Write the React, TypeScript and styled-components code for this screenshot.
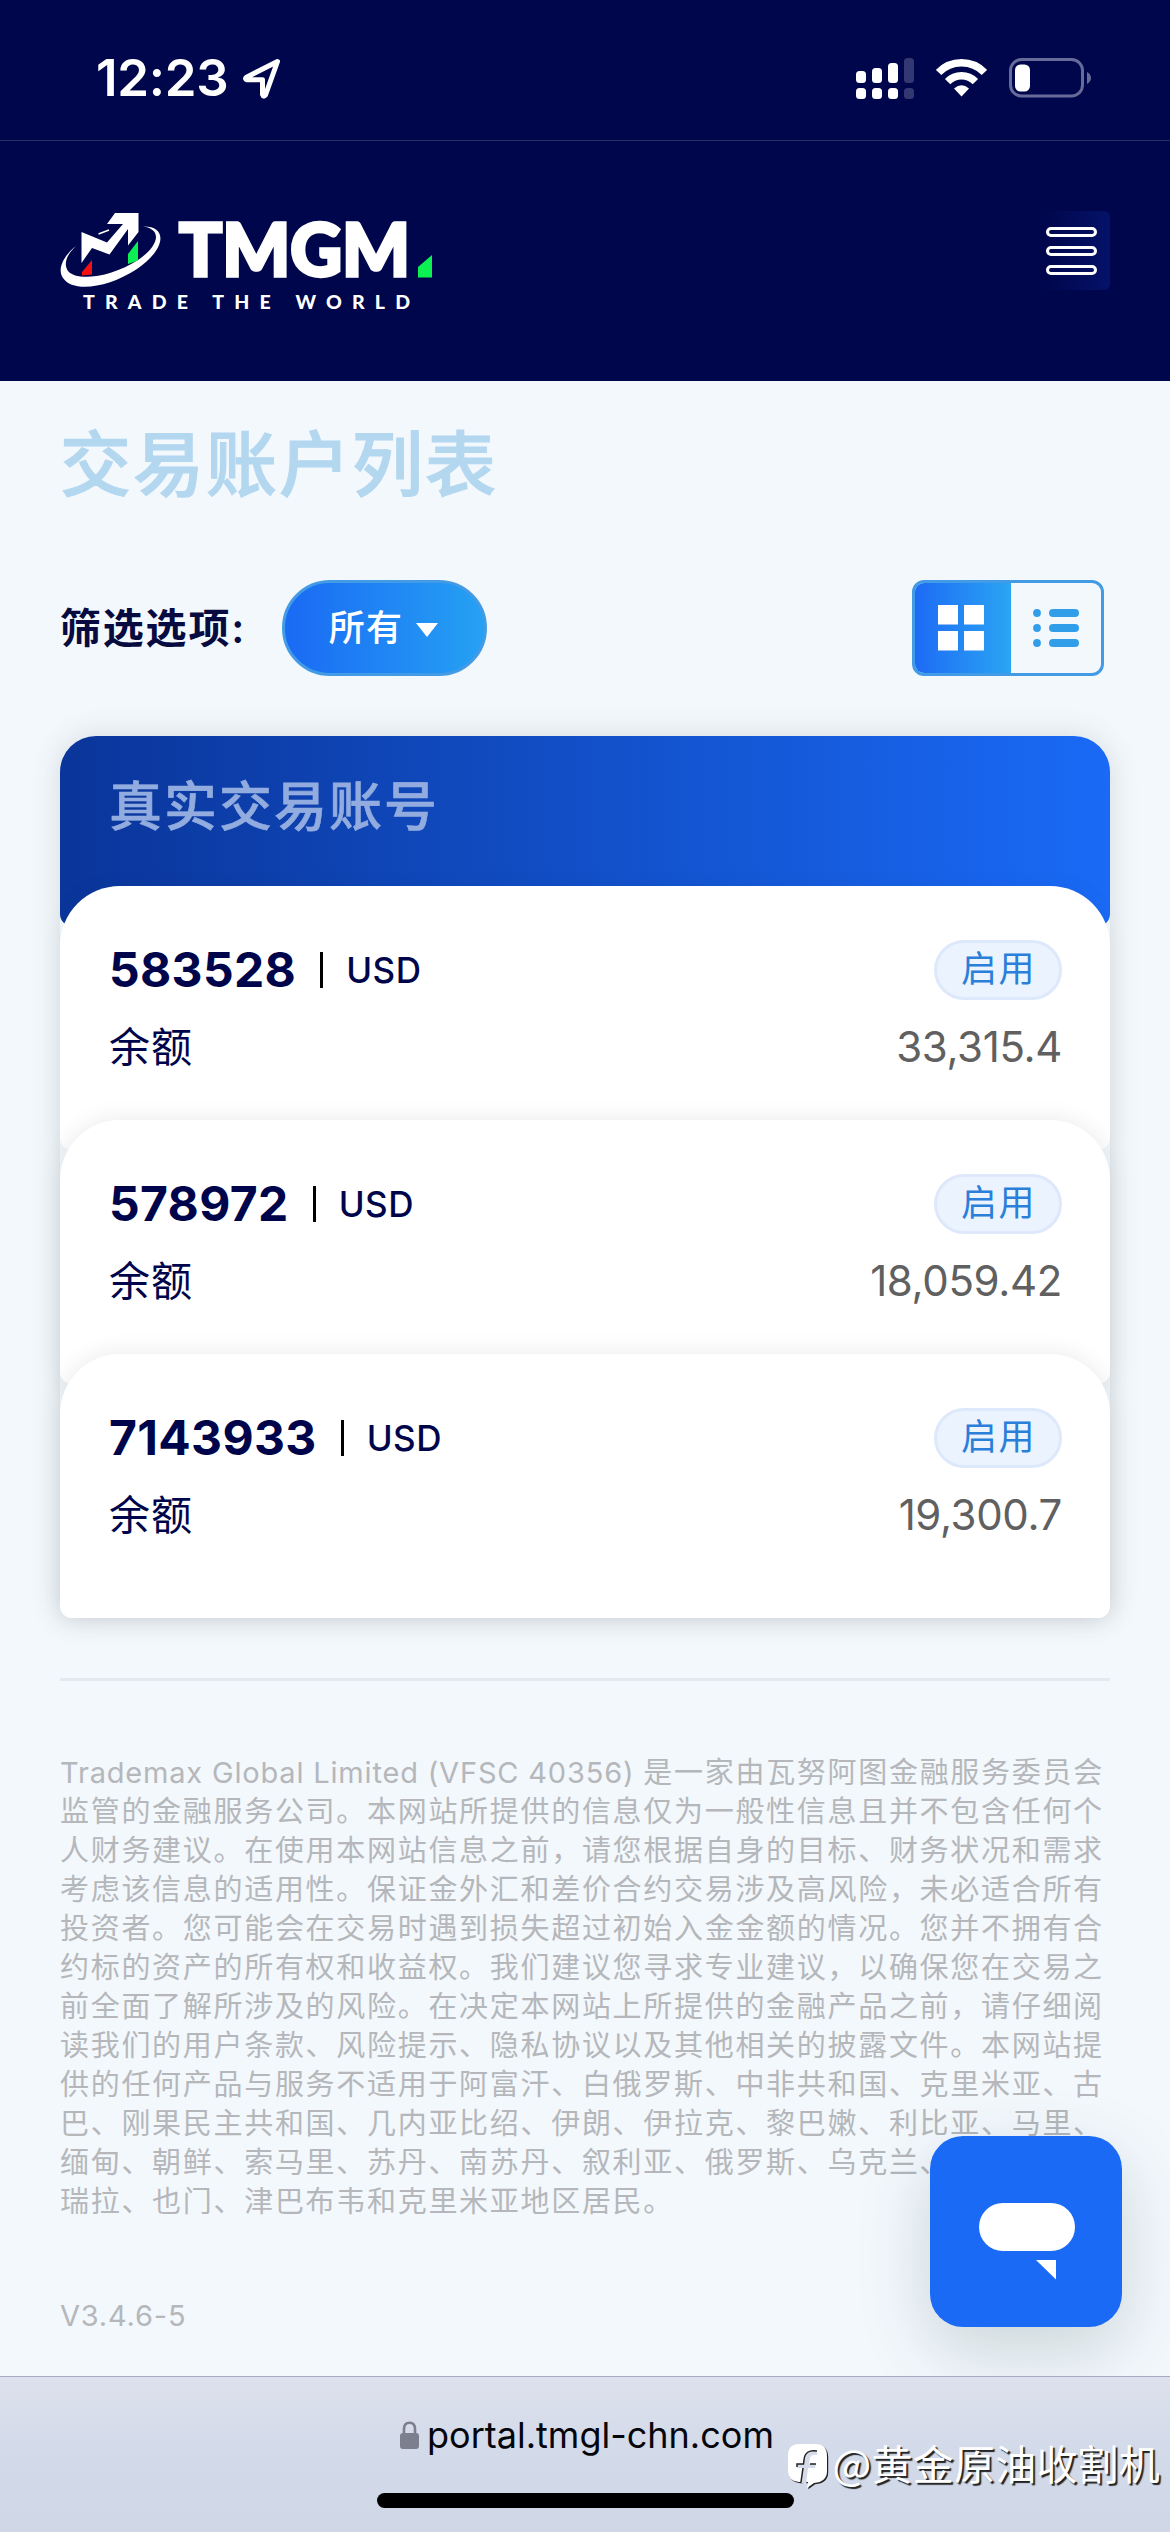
import React from "react";
import styled, { createGlobalStyle } from "styled-components";

const GlobalStyle = createGlobalStyle`
  * { box-sizing: border-box; }
  body {
    margin: 0;
    background: #f3f8fd;
    font-family: Inter, "Noto Sans CJK SC", sans-serif;
  }
`;

const Screen = styled.div`
  position: relative;
  display: flex;
  flex-direction: column;
  width: 1170px;
  height: 2532px;
  overflow: hidden;
  background: #f3f8fd;
`;

const StatusBar = styled.div`
  display: flex;
  align-items: flex-start;
  justify-content: space-between;
  height: 141px;
  padding: 48px 78px 0 96px;
  background: #00064b;
  border-bottom: 1px solid #2b3069;
`;

const StatusGroup = styled.div<{ $gap: number }>`
  display: flex;
  align-items: center;
  gap: ${(p) => p.$gap}px;
  height: 60px;
`;

const Clock = styled.span`
  font-size: 51px;
  line-height: 60px;
  font-weight: 600;
  letter-spacing: -0.3px;
  color: #fff;
`;

const NavBar = styled.header`
  display: flex;
  align-items: flex-start;
  justify-content: space-between;
  height: 240px;
  padding: 50px 60px 0;
  background: #00064b;
`;

const MenuButton = styled.button`
  display: flex;
  flex-direction: column;
  align-items: center;
  gap: 9px;
  width: 84px;
  height: 79px;
  margin-top: 20px;
  padding: 16px 4px 0 10px;
  border: 0;
  border-radius: 6px;
  background: linear-gradient(90deg, #00064b 20%, #041268 100%);
`;

const MenuBar = styled.span`
  width: 51px;
  height: 10px;
  border: 3px solid #fff;
  border-radius: 5px;
`;

const Content = styled.main`
  display: flex;
  flex-direction: column;
  flex: 1;
  padding: 0 60px;
`;

const PageTitle = styled.h1`
  margin: 33px 0 0;
  font-size: 71px;
  line-height: 100px;
  font-weight: 500;
  letter-spacing: 2px;
  color: #b4d7f0;
  -webkit-text-stroke: 1.2px #b4d7f0;
`;

const FilterRow = styled.div`
  display: flex;
  align-items: center;
  height: 96px;
  margin-top: 66px;
  padding-right: 6px;
`;

const FilterLabel = styled.span`
  width: 222px;
  margin-top: -1px;
  font-size: 41px;
  line-height: 60px;
  font-weight: 600;
  letter-spacing: 1.8px;
  white-space: nowrap;
  color: #070b40;
`;

const FilterButton = styled.button`
  display: flex;
  align-items: center;
  justify-content: center;
  gap: 13px;
  width: 205px;
  height: 96px;
  padding: 0 2px 0 0;
  border: 3px solid #429be4;
  border-radius: 48px;
  background: linear-gradient(90deg, #1a6af4, #25a1f3);
  font-family: inherit;
  font-size: 36px;
  line-height: 54px;
  font-weight: 500;
  letter-spacing: 1.2px;
  color: #fff;
`;

const ButtonText = styled.span`
  height: 54px;
`;

const ViewToggle = styled.div`
  display: flex;
  width: 192px;
  height: 96px;
  margin-left: auto;
  border: 3px solid #429be4;
  border-radius: 12px;
  overflow: hidden;
`;

const ToggleOption = styled.button<{ $active?: boolean }>`
  display: flex;
  align-items: center;
  justify-content: center;
  width: ${(p) => (p.$active ? 96 : 90)}px;
  padding: ${(p) => (p.$active ? "0 5px 0 0" : "0")};
  border: 0;
  background: ${(p) => (p.$active ? "linear-gradient(90deg, #1d6bf5, #2aa5f3)" : "transparent")};
`;

const AccountPanel = styled.section`
  display: flex;
  flex-direction: column;
  margin-top: 60px;
  border-radius: 36px 36px 12px 12px;
  box-shadow: 0 0 30px rgba(60, 70, 60, 0.16);
`;

const PanelHeader = styled.div`
  height: 190px;
  padding: 35px 49px 0;
  border-radius: 36px 36px 12px 12px;
  background: linear-gradient(90deg, #0a359a, #1a6af6);
  font-size: 53px;
  line-height: 72px;
  font-weight: 500;
  letter-spacing: 2px;
  color: #92acdf;
  -webkit-text-stroke: 0.6px #92acdf;
`;

const AccountCard = styled.article<{ $first?: boolean }>`
  position: relative;
  display: flex;
  flex-direction: column;
  height: 264px;
  margin-top: ${(p) => (p.$first ? -40 : -30)}px;
  padding: 54px 48px 0 49px;
  border-radius: 60px 60px 12px 12px;
  background: #fff;
  box-shadow: 0 0 24px rgba(0, 0, 0, ${(p) => (p.$first ? 0.04 : 0.09)});
`;

const CardRow = styled.div<{ $height: number }>`
  display: flex;
  align-items: center;
  justify-content: space-between;
  height: ${(p) => p.$height}px;
`;

const AccountId = styled.div`
  display: flex;
  align-items: center;
  color: #00054b;
`;

const AccountNumber = styled.span`
  font-size: 48px;
  line-height: 60px;
  font-weight: 700;
  letter-spacing: 0.35px;
`;

const Separator = styled.span`
  width: 3px;
  height: 36px;
  margin: 0 23px 0 24px;
  background: #000;
`;

const Currency = styled.span`
  margin-top: -1px;
  font-size: 35px;
  line-height: 60px;
  font-weight: 500;
  letter-spacing: 0.5px;
`;

const StatusBadge = styled.span`
  display: flex;
  align-items: center;
  justify-content: center;
  width: 128px;
  height: 60px;
  padding-left: 1px;
  border: 3px solid #dde9fb;
  border-radius: 30px;
  background: #ebf3fe;
  font-size: 36px;
  line-height: 52px;
  letter-spacing: 1.5px;
  color: #2a7fd8;
`;

const BadgeText = styled.span`
  height: 54px;
`;

const BalanceLabel = styled.span`
  margin-top: -1px;
  font-size: 41px;
  line-height: 60px;
  letter-spacing: 1px;
  color: #00054b;
`;

const Balance = styled.span`
  margin-top: -1px;
  font-size: 42px;
  line-height: 60px;
  letter-spacing: -0.35px;
  color: #606060;
`;

const Divider = styled.hr`
  width: 100%;
  height: 3px;
  margin: 60px 0 0;
  border: 0;
  background: #e3e9ee;
`;

const Disclaimer = styled.p`
  margin: 72px 0 0;
  font-size: 29px;
  line-height: 39px;
  letter-spacing: 1.7px;
  color: #b5b7ba;
`;

const DisclaimerLine = styled.span`
  display: block;
  white-space: nowrap;
`;

const Company = styled.span`
  letter-spacing: 0.82px;
`;

const Version = styled.div`
  margin-top: 75px;
  font-size: 29px;
  line-height: 39px;
  letter-spacing: 0.8px;
  color: #b5b7ba;
`;

const ChatButton = styled.button`
  position: absolute;
  left: 930px;
  top: 2136px;
  width: 192px;
  height: 191px;
  padding: 0;
  border: 0;
  border-radius: 33px;
  background: #1b6af5;
  box-shadow: 0 24px 72px rgba(20, 60, 50, 0.18);
`;

const BrowserBar = styled.footer`
  position: relative;
  display: flex;
  flex-direction: column;
  align-items: center;
  height: 156px;
  padding-top: 29px;
  border-top: 1px solid #a6abc2;
  background: linear-gradient(180deg, #dde1ed, #d3dae9 45%, #cfd6e6);
`;

const Address = styled.div`
  display: flex;
  align-items: center;
  gap: 8px;
  height: 57px;
  padding-left: 4px;
  font-size: 36px;
  line-height: 56px;
  color: #05060c;
`;

const HomeIndicator = styled.div`
  width: 417px;
  height: 15px;
  margin-top: 30px;
  border-radius: 8px;
  background: #000;
`;

const Watermark = styled.div`
  position: absolute;
  right: 10px;
  bottom: 41px;
  display: flex;
  align-items: center;
  gap: 3px;
  height: 58px;
  font-family: "Noto Sans CJK SC", sans-serif;
  font-size: 41px;
  font-weight: 400;
  line-height: 58px;
  letter-spacing: 0.2px;
  white-space: nowrap;
  color: #fff;
  text-shadow: 2px 2px 1px #222;
`;

function LocationIcon() {
  return (
    <svg width="40" height="42" viewBox="0 0 40 42">
      <path d="M35.500 4.500 4.500 20.200q-2.200 1.700.5 2.600h15.500V37.500q1 3 3 .5Z" fill="none" stroke="#fff" strokeWidth="5" strokeLinejoin="round" />
    </svg>
  );
}

function SignalIcon() {
  const bars = [
    { x: 0, y: 13, h: 12 },
    { x: 16, y: 10, h: 15 },
    { x: 32, y: 5, h: 20 },
    { x: 48, y: 0, h: 25 },
  ];
  return (
    <svg width="58" height="41" viewBox="0 0 58 41">
      {bars.map((b, i) => (
        <g key={b.x} fill={i === 3 ? "#333873" : "#fff"}>
          <rect x={b.x} y={b.y} width="10" height={b.h} rx="3.500" />
          <rect x={b.x} y="30" width="10" height="11" rx="3.500" />
        </g>
      ))}
    </svg>
  );
}

function WifiIcon() {
  return (
    <svg width="51" height="38" viewBox="0 0 51 38">
      <g fill="none" stroke="#fff" strokeWidth="7.500">
        <path d="M2.600 13.500a32 32 0 0 1 45.800 0" />
        <path d="M11.600 22.600a19.500 19.500 0 0 1 27.800 0" />
      </g>
      <path d="M18 29.500q7.500-6.500 15 0L25.500 37.500Z" fill="#fff" />
    </svg>
  );
}

function BatteryIcon() {
  return (
    <svg width="83" height="40" viewBox="0 0 83 40">
      <rect x="1.500" y="1.500" width="72" height="36.500" rx="11" fill="none" stroke="#666b99" strokeWidth="3" />
      <rect x="6" y="6.500" width="15" height="27" rx="5.500" fill="#fff" />
      <path d="M78 14q4 2.500 4 6t-4 6Z" fill="#666b99" />
    </svg>
  );
}

const LogoText = styled.text<{ $size: number; $weight: number; $stroke?: number }>`
  font-family: Lato, sans-serif;
  font-size: ${(p) => p.$size}px;
  font-weight: ${(p) => p.$weight};
  fill: #fff;
  stroke: #fff;
  stroke-width: ${(p) => p.$stroke ?? 0}px;
`;

function Logo() {
  return (
    <svg width="376" height="134" viewBox="60 191 376 134">
      <path d="M76 246C63 256 57 270 63 278C73 293 108 288 137 269C165 250 169 226 143 226.500C162 229 160 245 138 260C112 277 77 282 68 271C63 264 67 254 76 246Z" fill="#fff" />
      <path d="m98.500 234 10.500-4" stroke="#fff" strokeWidth="1.500" />
      <path d="M81.500 232 107 242.500 123 224H107L115 213H138.500V232L128 245.500V229L109.500 254.500 92 248 81.500 263Z" fill="#fff" />
      <path d="M82 272 92 260V274.500L82 275.500Z" fill="#f41010" />
      <path d="M128 254 138 241V260.500L128 264Z" fill="#0cf052" />
      <LogoText $size={73} $weight={900} $stroke={3.4} x="179" y="275.500" textLength="231" lengthAdjust="spacingAndGlyphs">
        TMGM
      </LogoText>
      <path d="M418 267 432 255V277.500H418Z" fill="#0cf052" />
      <LogoText $size={19.5} $weight={900} x="83" y="309" textLength="327">
        TRADE THE WORLD
      </LogoText>
    </svg>
  );
}

const Caret = styled.svg`
  margin-top: 4px;
`;

function CaretIcon() {
  return (
    <Caret width="22" height="14" viewBox="0 0 22 14">
      <path d="M0 0h22L11 14Z" fill="#fff" />
    </Caret>
  );
}

function GridIcon() {
  return (
    <svg width="46" height="46" viewBox="0 0 46 46" fill="#fff">
      <rect width="20" height="19.500" />
      <rect x="26" width="20" height="19.500" />
      <rect y="26" width="20" height="19.500" />
      <rect x="26" y="26" width="20" height="19.500" />
    </svg>
  );
}

function ListIcon() {
  return (
    <svg width="46" height="38" viewBox="0 0 46 38" fill="#319ee9">
      {[0, 15, 30].map((y) => (
        <g key={y}>
          <circle cx="4" cy={y + 4} r="3.900" />
          <rect x="16" y={y} width="30" height="8" rx="4" />
        </g>
      ))}
    </svg>
  );
}

function LockIcon() {
  return (
    <svg width="19" height="28" viewBox="0 0 19 28">
      <path d="M4 13V8q0-6.200 5.500-6.200T15 8v5" fill="none" stroke="#7b7f8e" strokeWidth="2.600" />
      <rect y="12" width="19" height="16" rx="3" fill="#7b7f8e" />
    </svg>
  );
}

const ChatGlyph = styled.svg`
  display: block;
`;

function ChatIcon() {
  return (
    <ChatGlyph width="192" height="191" viewBox="0 0 192 191" fill="#fff">
      <rect x="49" y="67" width="96" height="48" rx="24" />
      <path d="M106 124h20v19.500Z" />
    </ChatGlyph>
  );
}

const WatermarkGlyph = styled.svg`
  margin-top: 10px;
`;

function WatermarkIcon() {
  return (
    <WatermarkGlyph width="43" height="48" viewBox="0 0 43 48">
      <path d="M12 1h16q12 0 12 12v15q0 11-13 12l-7 5 1-6H12Q1 38 1 28V13Q1 1 12 1Z" fill="#222" transform="translate(1.200 1.200)" />
      <path d="M12 1h16q12 0 12 12v15q0 11-13 12l-7 5 1-6H12Q1 38 1 28V13Q1 1 12 1Z" fill="#fff" />
      <path d="M30 8q-12-2-13 9l-.5 4H10v4h6l-2 14 5 4 2-18h7l1-4h-7l1-6q1-4 7-3Z" fill="#d5dbe9" />
      <path d="M30 8q-12-2-13 9l-.5 4H10v3M14 39l2-14M23 21h6" fill="none" stroke="#222" strokeWidth="1.500" />
    </WatermarkGlyph>
  );
}

const accounts = [
  { id: "583528", balance: "33,315.4" },
  { id: "578972", balance: "18,059.42" },
  { id: "7143933", balance: "19,300.7" },
];

const company = "Trademax Global Limited (VFSC 40356) ";

const disclaimer = [
  "监管的金融服务公司。本网站所提供的信息仅为一般性信息且并不包含任何个",
  "人财务建议。在使用本网站信息之前，请您根据自身的目标、财务状况和需求",
  "考虑该信息的适用性。保证金外汇和差价合约交易涉及高风险，未必适合所有",
  "投资者。您可能会在交易时遇到损失超过初始入金金额的情况。您并不拥有合",
  "约标的资产的所有权和收益权。我们建议您寻求专业建议，以确保您在交易之",
  "前全面了解所涉及的风险。在决定本网站上所提供的金融产品之前，请仔细阅",
  "读我们的用户条款、风险提示、隐私协议以及其他相关的披露文件。本网站提",
  "供的任何产品与服务不适用于阿富汗、白俄罗斯、中非共和国、克里米亚、古",
  "巴、刚果民主共和国、几内亚比绍、伊朗、伊拉克、黎巴嫩、利比亚、马里、",
  "缅甸、朝鲜、索马里、苏丹、南苏丹、叙利亚、俄罗斯、乌克兰、",
  "瑞拉、也门、津巴布韦和克里米亚地区居民。",
];

export default function App() {
  return (
    <Screen>
      <GlobalStyle />
      <StatusBar>
        <StatusGroup $gap={14}>
          <Clock>12:23</Clock>
          <LocationIcon />
        </StatusGroup>
        <StatusGroup $gap={22}>
          <SignalIcon />
          <WifiIcon />
          <BatteryIcon />
        </StatusGroup>
      </StatusBar>
      <NavBar>
        <Logo />
        <MenuButton aria-label="菜单">
          <MenuBar />
          <MenuBar />
          <MenuBar />
        </MenuButton>
      </NavBar>
      <Content>
        <PageTitle>交易账户列表</PageTitle>
        <FilterRow>
          <FilterLabel>筛选选项:</FilterLabel>
          <FilterButton>
            <ButtonText>所有</ButtonText>
            <CaretIcon />
          </FilterButton>
          <ViewToggle>
            <ToggleOption $active>
              <GridIcon />
            </ToggleOption>
            <ToggleOption>
              <ListIcon />
            </ToggleOption>
          </ViewToggle>
        </FilterRow>
        <AccountPanel>
          <PanelHeader>真实交易账号</PanelHeader>
          {accounts.map((account, i) => (
            <AccountCard key={account.id} $first={i === 0}>
              <CardRow $height={60}>
                <AccountId>
                  <AccountNumber>{account.id}</AccountNumber>
                  <Separator />
                  <Currency>USD</Currency>
                </AccountId>
                <StatusBadge>
                  <BadgeText>启用</BadgeText>
                </StatusBadge>
              </CardRow>
              <CardRow $height={94}>
                <BalanceLabel>余额</BalanceLabel>
                <Balance>{account.balance}</Balance>
              </CardRow>
            </AccountCard>
          ))}
        </AccountPanel>
        <Divider />
        <Disclaimer>
          <DisclaimerLine>
            <Company>{company}</Company>
            是一家由瓦努阿图金融服务委员会
          </DisclaimerLine>
          {disclaimer.map((line) => (
            <DisclaimerLine key={line}>{line}</DisclaimerLine>
          ))}
        </Disclaimer>
        <Version>V3.4.6-5</Version>
      </Content>
      <ChatButton aria-label="在线客服">
        <ChatIcon />
      </ChatButton>
      <BrowserBar>
        <Address>
          <LockIcon />
          portal.tmgl-chn.com
        </Address>
        <HomeIndicator />
        <Watermark>
          <WatermarkIcon />
          @黄金原油收割机
        </Watermark>
      </BrowserBar>
    </Screen>
  );
}
